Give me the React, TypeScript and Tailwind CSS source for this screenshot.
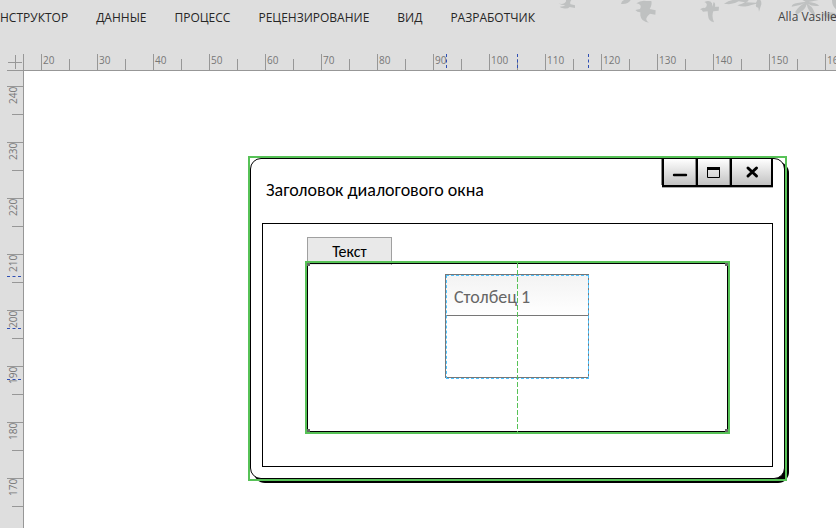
import type { ReactNode } from "react";

const tabs = ["НСТРУКТОР", "ДАННЫЕ", "ПРОЦЕСС", "РЕЦЕНЗИРОВАНИЕ", "ВИД", "РАЗРАБОТЧИК"];
const columnMarks = Array.from({ length: 15 }, (_, i) => 20 + i * 10);
const rowMarks = Array.from({ length: 8 }, (_, i) => 240 - i * 10);

function Birds() {
  return (
    <svg className="absolute right-0 top-0 h-[30px] w-[296px]" viewBox="0 0 888 90" fill="#bfc1c1" aria-hidden="true">
      <path d="M55 10 Q66 14 74 9 Q80 4 78 0 L94 0 Q88 8 92 13 L105 16 L105 24 L89 21 Q84 27 70 25 Q62 24 59 20 Q72 20 76 16 Q64 16 55 10Z" />
      <path d="M243 12 Q244 3 252 0 L272 0 Q264 14 243 12Z" />
      <path d="M289 10 Q303 0 319 3 L334 3 Q337 14 329 27 L347 31 L346 44 L330 41 Q321 48 319 55 Q318 64 327 68 Q303 66 301 46 L301 37 Q291 37 286 30 L300 27 Q308 14 289 10Z" />
      <path d="M480 28 Q489 21 495 24 Q502 18 500 12 Q498 7 493 6 Q510 -1 516 10 L517 20 L521 6 Q527 8 525 20 L537 20 L536 32 L520 34 Q514 48 522 67 Q505 65 504 45 L503 34 L489 35 Q486 29 480 28Z" />
      <path d="M552 11 Q565 2 578 0 L626 0 Q625 5 617 7 L648 8 L652 0 L661 0 Q667 9 662 19 L657 35 L655 23 Q644 21 649 11 Q629 16 620 19 Q605 21 592 16 Q608 12 615 7 L596 4 Q579 16 552 11Z" />
      <path d="M755 20 Q756 11 772 9 L797 5 L787 0 L836 0 L806 6 Q828 8 838 17 Q818 21 803 11 Q826 27 824 47 Q805 38 800 13 Q796 28 782 36 Q767 48 766 35 Q777 17 795 9 Q778 18 755 20Z" />
      <path d="M876 0 L888 0 L888 28 Q876 18 876 0Z M846 42 Q862 33 884 39 L888 43 L888 54 L866 58 Z" />
    </svg>
  );
}

function Header() {
  return (
    <header className="relative flex h-[54px] shrink-0 items-start justify-between overflow-hidden pt-2">
      <Birds />
      <nav className="relative flex gap-7 whitespace-nowrap font-['Open_Sans','Noto_Sans',sans-serif] text-[12px] leading-5 text-[#262626]">
        {tabs.map((t) => (
          <button key={t} type="button">{t}</button>
        ))}
      </nav>
      <button type="button" className="relative w-[58px] shrink-0 whitespace-nowrap text-left font-['Open_Sans','Noto_Sans',sans-serif] text-[12px] leading-[18px] text-[#444]">
        Alla Vasiliev
      </button>
    </header>
  );
}

function HorizontalRuler() {
  return (
    <div className="flex h-[17px] shrink-0">
      <div className="flex w-6 shrink-0 border-r border-[#979797] pl-[7px]">
        <svg className="h-[17px] w-4" viewBox="0 0 16 17" stroke="#979797" aria-hidden="true">
          <path d="M8.500 1V15M1 8.500H15M0 16.500H16" />
        </svg>
      </div>
      <div className="relative flex min-w-0 flex-1 overflow-hidden border-b border-[#979797] pl-[17px]">
        {columnMarks.map((n) => (
          <div key={n} className="flex w-14 shrink-0 items-end">
            <span className="h-4 w-7 border-l border-[#979797] pl-px text-[10px] leading-3">{n}</span>
            <span className="h-[11px] w-7 border-l border-[#979797]" />
          </div>
        ))}
        <i className="absolute left-[422px] top-0 h-[14px] border-l border-dashed border-[#2f4fb5]" />
        <i className="absolute left-[493px] top-0 h-[14px] border-l border-dashed border-[#2f4fb5]" />
        <i className="absolute left-[564px] top-0 h-[14px] border-l border-dashed border-[#2f4fb5]" />
      </div>
    </div>
  );
}

function VerticalRuler() {
  return (
    <div className="relative flex w-6 shrink-0 flex-col overflow-hidden border-r border-[#979797] pt-[15px]">
      {rowMarks.map((n) => (
        <div key={n} className="flex h-14 shrink-0 flex-col items-end">
          <span className="flex h-7 w-4 justify-start border-t border-[#979797]">
            <span className="rotate-180 text-right text-[10px] leading-3 [writing-mode:vertical-rl]">{n}</span>
          </span>
          <span className="h-7 w-[11px] border-t border-[#979797]" />
        </div>
      ))}
      <i className="absolute left-[7px] top-[205px] w-[14px] border-t border-dashed border-[#2f4fb5]" />
      <i className="absolute left-[7px] top-[257px] w-[14px] border-t border-dashed border-[#2f4fb5]" />
      <i className="absolute left-[7px] top-[308px] w-[14px] border-t border-dashed border-[#2f4fb5]" />
    </div>
  );
}

function WindowButton({ label, children }: { label: string; children: ReactNode }) {
  return (
    <button type="button" aria-label={label} className="flex items-center justify-center border-l-2 border-black bg-linear-to-b from-white to-[#c2c2c2] shadow-[-1px_0_0_#8a8a8a]">
      {children}
    </button>
  );
}

function WindowButtons() {
  return (
    <div className="mr-[11px] grid h-[29px] w-[111px] grid-cols-[34px_34px_41px] border-b-2 border-r-2 border-t border-black shadow-[0_1px_0_#aaa]">
      <WindowButton label="Свернуть">
        <svg className="h-4 w-4" viewBox="0 0 16 16" aria-hidden="true">
          <path d="M2 11H14" stroke="#000" strokeWidth="2.400" strokeLinecap="round" />
        </svg>
      </WindowButton>
      <WindowButton label="Развернуть">
        <svg className="h-4 w-4" viewBox="0 0 16 16" aria-hidden="true">
          <path d="M1.500 3.500H13.500V13.500H1.500Z" fill="none" stroke="#000" />
          <path d="M1 3H14V6H1Z" />
        </svg>
      </WindowButton>
      <WindowButton label="Закрыть">
        <svg className="h-4 w-4" viewBox="0 0 16 16" aria-hidden="true">
          <path d="M4 4L12.500 12M12.500 4L4 12" stroke="#000" strokeWidth="3" strokeLinecap="round" />
        </svg>
      </WindowButton>
    </div>
  );
}

function ColumnTable() {
  return (
    <div className="relative h-[105px] w-36">
      <table className="h-[104px] w-full border-separate border-spacing-0 border border-[#777] text-left">
        <thead>
          <tr className="h-[41px]">
            <th className="border-b border-[#777] bg-linear-to-b from-[#f3f3f3] to-white px-2 pt-1 text-[18px] font-normal leading-5 text-[#666]">Столбец 1</th>
          </tr>
        </thead>
        <tbody>
          <tr><td /></tr>
        </tbody>
      </table>
      <div className="pointer-events-none absolute bottom-0 left-px right-0 top-px border border-dashed border-[#4fc3ff]" />
    </div>
  );
}

function Dialog() {
  return (
    <section className="absolute left-[224px] top-[85px] h-[325px] w-[539px] p-[2px]">
      <div className="flex h-full flex-col rounded-[11px] border border-black bg-white shadow-[4px_4px_0_#000]">
        <div className="-mt-px flex items-start justify-between pl-[15px]">
          <h1 className="pt-[22px] text-[18px] leading-5">Заголовок диалогового окна</h1>
          <WindowButtons />
        </div>
        <div className="mx-[11px] mb-[11px] mt-auto flex h-[244px] flex-col border border-black px-[42px] pb-8 pt-[13px]">
          <button type="button" className="relative ml-[2px] -mb-1 h-7 w-[85px] border border-b-0 border-[#a0a0a0] bg-[#e9e9e9] text-[16px]">
            Текст
          </button>
          <div className="relative min-h-0 flex-1 border-2 border-[#57c257]">
            <div className="flex h-full items-start justify-center border border-black pr-px pt-[10px]">
              <ColumnTable />
            </div>
            <i className="absolute inset-y-0 left-[210px] w-px bg-[repeating-linear-gradient(to_bottom,#57c257_0_5px,transparent_5px_7px)]" />
            <i className="absolute left-0 top-0 size-[3px] bg-[#666]" />
            <i className="absolute right-0 top-0 size-[3px] bg-[#666]" />
            <i className="absolute bottom-0 left-0 size-[3px] bg-[#666]" />
            <i className="absolute bottom-0 right-0 size-[3px] bg-[#666]" />
          </div>
        </div>
      </div>
      <div className="pointer-events-none absolute inset-0 border-2 border-[#57c257]" />
    </section>
  );
}

export default function App() {
  return (
    <div className="flex h-screen flex-col overflow-hidden bg-[#dedede] text-black">
      <Header />
      <div className="flex min-h-0 flex-1 flex-col font-['Open_Sans','Noto_Sans',sans-serif] text-[#777]">
        <HorizontalRuler />
        <div className="flex min-h-0 flex-1">
          <VerticalRuler />
          <main className="relative min-w-0 flex-1 overflow-hidden bg-white font-['Carlito','Lato',sans-serif] text-black">
            <Dialog />
          </main>
        </div>
      </div>
    </div>
  );
}
